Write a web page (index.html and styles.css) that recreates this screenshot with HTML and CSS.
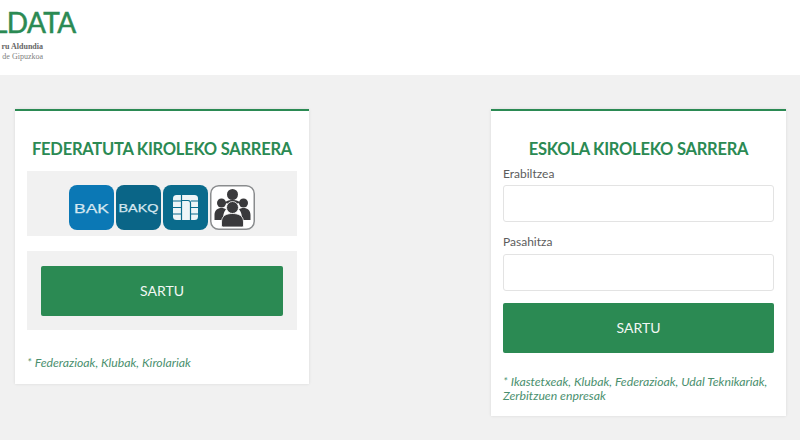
FILE: index.html
```html
<!DOCTYPE html>
<html lang="en">

<head>
    <meta charset="UTF-8" />
    <title>Kirola | Sarrera</title>
    <link rel="stylesheet" href="styles.css">
</head>

<body>

    <header class="site-header">
        <div class="logo">
            <div class="logo-name">LDATA</div>
            <div class="logo-sub logo-sub-strong">ru Aldundia</div>
            <div class="logo-sub">de Gipuzkoa</div>
        </div>
    </header>

    <main class="login-grid">

        <section class="login-card login-card-short">
            <h2>FEDERATUTA KIROLEKO SARRERA</h2>

            <div class="band band-icons">
                <svg class="cert" viewBox="0 0 45 45">
                    <rect width="45" height="45" rx="8" fill="#0b78b5" />
                    <text x="5" y="27.500" textLength="35" lengthAdjust="spacingAndGlyphs" class="cert-text cert-text-lg">BAK</text>
                </svg>
                <svg class="cert" viewBox="0 0 45 45">
                    <rect width="45" height="45" rx="8" fill="#0a6587" />
                    <text x="2.500" y="27" textLength="40" lengthAdjust="spacingAndGlyphs" class="cert-text cert-text-sm">BAKQ</text>
                </svg>
                <svg class="cert" viewBox="0 0 45 45">
                    <rect width="45" height="45" rx="8" fill="#0a6b8c" />
                    <rect x="10" y="10" width="25" height="25" rx="3.500" fill="#eef5f7" />
                    <path fill="none" stroke="#0a6b8c" stroke-width="1.200" d="M10 16h8M10 22.500h8M10 29h8M18.500 10v25M35 16h-7M35 22.500h-7M35 29h-7M27.500 35v-17a2.500 2.500 0 0 0-2.500-2.500h-6" />
                </svg>
                <svg class="cert" viewBox="0 0 45 45">
                    <rect x=".75" y=".75" width="43.500" height="43.500" rx="8" fill="#fff" stroke="#8a8c8e" stroke-width="1.500" />
                    <g fill="#3a3a3c">
                        <circle cx="22.500" cy="9.500" r="5.500" />
                        <circle cx="11.500" cy="18" r="4.500" />
                        <circle cx="33.500" cy="18" r="4.500" />
                        <path d="M4.500 35v-5c0-4.500 3-7 7-7 2 0 3.500.5 4.500 1.500-2 2-3 5-3 10.500zM40.500 35v-5c0-4.500-3-7-7-7-2 0-3.500.5-4.500 1.500 2 2 3 5 3 10.500zM14 19c1-3 4.500-4 8.500-4s7.500 1 8.500 4c-2-1-4-1-5 0a7 7 0 0 0-7 0c-1-1-3-1-5 0z" />
                    </g>
                    <g fill="#3a3a3c" stroke="#fff" stroke-width=".8">
                        <circle cx="22.500" cy="22.500" r="6" />
                        <path d="M11.500 41v-4c0-6 4.500-8.500 11-8.500s11 2.500 11 8.500v4a2 2 0 0 1-2 1h-18a2 2 0 0 1-2-1z" />
                    </g>
                </svg>
            </div>

            <div class="band band-button">
                <button class="btn-green">SARTU</button>
            </div>

            <p class="note note-short">* Federazioak, Klubak, Kirolariak</p>
        </section>

        <section class="login-card login-card-wide">
            <h2 class="title-tight">ESKOLA KIROLEKO SARRERA</h2>

            <label class="field-label">Erabiltzea</label>
            <input class="field" type="text">

            <label class="field-label field-label-next">Pasahitza</label>
            <input class="field" type="password">

            <button class="btn-green btn-form">SARTU</button>

            <p class="note">* Ikastetxeak, Klubak, Federazioak, Udal Teknikariak, Zerbitzuen enpresak</p>
        </section>

    </main>

</body>

</html>
```

FILE: styles.css
```css
:root {
    --green: #2b8a53;
    --green-note: #4a8f6e;
    --bg-grey: #f1f1f1;
    --text-label: #5c5c5c;
}

* {
    box-sizing: border-box
}

html,
body {
    height: 100%;
    overflow: hidden;
}

body {
    margin: 0;
    font-family: Lato, "Open Sans", sans-serif;
    background: var(--bg-grey);
}

.site-header {
    height: 75px;
    background: #fff;
    overflow: hidden;
}

.logo {
    padding-top: 4px;
}

.logo-name {
    margin-left: -7px;
    margin-bottom: 2px;
    font-size: 28px;
    line-height: 36px;
    font-weight: 400;
    letter-spacing: -.6px;
    -webkit-text-stroke: .5px var(--green);
    color: var(--green);
    white-space: nowrap;
}

.logo-sub {
    font-family: "Liberation Serif", serif;
    font-size: 8px;
    line-height: 10px;
    color: #808080;
    white-space: nowrap;
    width: 43px;
    text-align: right;
}

.logo-sub-strong {
    font-weight: 700;
    color: #666;
}

.login-grid {
    display: flex;
    justify-content: space-between;
    align-items: flex-start;
    padding: 34px 14px 0 15px;
}

.login-card {
    width: 294px;
    height: 307px;
    padding: 0 12px;
    background: #fff;
    border-top: 2px solid var(--green);
    box-shadow: 0 0 3px rgba(0, 0, 0, .1);
}

.login-card-short {
    height: 275px;
}

.login-card-wide {
    width: 295px;
}

h2 {
    margin: 0;
    padding-top: 28px;
    height: 60px;
    font-size: 16.500px;
    line-height: 20px;
    font-weight: 700;
    letter-spacing: -.25px;
    text-align: center;
    color: var(--green);
    white-space: nowrap;
}

.title-tight {
    height: 55px;
}

.band {
    background: var(--bg-grey);
}

.band-icons {
    display: flex;
    justify-content: center;
    gap: 2px;
    height: 65px;
    padding-top: 14px;
    margin-bottom: 15px;
}

.cert {
    width: 45px;
    height: 45px;
}

.cert-text {
    font-family: "Liberation Sans", sans-serif;
    fill: #d5e7f0;
    stroke: #d5e7f0;
    stroke-width: .25px;
}

.cert-text-lg {
    font-size: 13px;
}

.cert-text-sm {
    font-size: 11px;
}

.band-button {
    height: 79px;
    padding: 15px 14px 14px;
}

.btn-green {
    display: block;
    width: 100%;
    height: 50px;
    padding: 0 0 2px;
    border: none;
    border-radius: 2px;
    background: var(--green);
    color: #f2f7f4;
    font-family: inherit;
    font-size: 14px;
}

.btn-form {
    margin-top: 12px;
}

.field-label {
    display: block;
    height: 19px;
    font-size: 12px;
    line-height: 15px;
    color: var(--text-label);
}

.field-label-next {
    margin-top: 12px;
    height: 20px;
}

.field {
    display: block;
    width: 100%;
    height: 37px;
    background: #fff;
    border: 1px solid #e3e3e3;
    border-radius: 3px;
}

.note {
    margin: 22px 0 0;
    font-size: 12.250px;
    line-height: 13.500px;
    font-style: italic;
    color: var(--green-note);
}

.note-short {
    margin-top: 26px;
}
```
